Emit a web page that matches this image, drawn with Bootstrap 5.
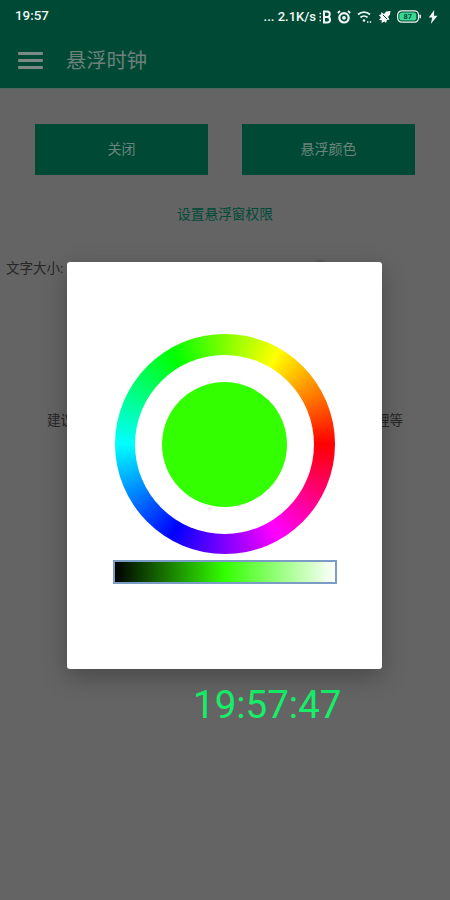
<!doctype html>
<html lang="zh">
<head>
<meta charset="utf-8">
<title>悬浮时钟</title>
<link rel="stylesheet" href="https://cdn.jsdelivr.net/npm/bootstrap@5.3.0/dist/css/bootstrap.min.css">
<style>
html,body{height:100%;}
body{background:#646464;font-family:Roboto,"Noto Sans CJK SC",sans-serif;overflow:hidden;}
.app-frame{width:450px;height:900px;position:relative;background:#646464;}
.app-head{background:#004a35;height:89px;border-bottom:1px solid #53665f;}
.stat-bar{height:33px;padding:0 12px 0 15px;color:#f2f7f5;font-weight:500;}
.stat-time{font-size:13.4px;}
.stat-rate{font-size:13px;margin-right:-3px;}
.stat-icons{gap:6px;}
.bolt-icon{margin-left:1px;}
.tool-bar{height:55px;padding-left:18px;gap:23px;}
.burger{width:25px;height:17px;}
.burger i{display:block;height:3px;background:#7b8a85;border-radius:1px;}
.app-name{font-size:20.3px;color:#6d807a;line-height:1;padding-top:2px;}
.main-area{padding:35px 35px 0;}
.act-btn{width:173px;height:51px;background:#004a35;color:#6a857b;font-size:14px;border:0;border-radius:0;padding:0;}
.act-btn:hover{background:#004a35;color:#6a857b;}
.perm-link{font-size:13.7px;color:#004a36;margin-top:30px;line-height:18px;text-align:center;}
.size-label{font-size:13.5px;color:#262626;padding-left:6px;margin-top:36px;line-height:18px;}
.hint-row{font-size:13.5px;color:#262626;padding:0 47px;margin-top:134px;line-height:18px;}
.clock-text{font-size:38.5px;line-height:46px;color:#16ef69;margin-top:253px;padding-left:193px;}
.slider-knob{position:absolute;left:315px;top:259px;width:11px;height:11px;border-radius:50%;background:#5b5b5b;}
.color-modal{position:absolute;left:67px;top:262px;width:315px;height:407px;background:#fff;border-radius:3px;box-shadow:0 8px 24px rgba(0,0,0,.28);padding-top:72px;}
.hue-ring{width:220px;height:220px;border-radius:50%;background:conic-gradient(from 90deg,#f00,#f0f,#00f,#0ff,#0f0,#ff0,#f00);}
.hue-hole{width:179px;height:179px;border-radius:50%;background:#fff;}
.hue-pick{width:125px;height:125px;border-radius:50%;background:#33ff00;}
.shade-bar{width:224px;height:24px;margin-top:6px;border:2px solid #7b9cc4;background:linear-gradient(90deg,#000,#33ff00 50%,#fff);}
</style>
</head>
<body>
<div class="app-frame d-flex flex-column">
  <header class="app-head">
    <div class="stat-bar d-flex align-items-center justify-content-between">
      <span class="stat-time">19:57</span>
      <div class="d-flex align-items-center stat-icons">
        <span class="stat-rate">... 2.1K/s</span>
        <svg width="12" height="14" viewBox="0 0 12 14" fill="none" stroke="#f2f7f5" stroke-width="2"><path d="M5 1.500h3a2.600 2.600 0 0 1 0 5.500H5zM5 7h3.300a2.700 2.700 0 0 1 0 5.500H5z"/><path d="M.5 3.500h1.500M.5 7h1.500M.5 10.500h1.500" stroke-width="1.600"/></svg>
        <svg width="14" height="14" viewBox="0 0 14 14" fill="none" stroke="#f2f7f5"><circle cx="7" cy="7.800" r="4.700" stroke-width="2.200"/><circle cx="7" cy="7.800" r="1.900" fill="#f2f7f5" stroke="none"/><path d="M.8 3L3 1M13.200 3L11 1" stroke-width="1.800"/></svg>
        <svg width="15" height="13" viewBox="0 0 15 13" fill="none" stroke="#f2f7f5" stroke-width="1.700"><path d="M1 4.500a9 9 0 0 1 12 0M3.500 7.500a5.200 5.200 0 0 1 7 0"/><circle cx="7" cy="10.500" r="1.300" fill="#f2f7f5" stroke="none"/><path d="M10 12h5" stroke-dasharray="1.400 1.400" stroke-width="1.400"/></svg>
        <svg width="13" height="14" viewBox="0 0 13 14" fill="#f2f7f5"><path d="M12.500 1L8 1.500 6 4 3.500 2 3 4.500 .8 5 3 7.500 1 10l2.800.2L3.500 13l3-1.500 1.500 1.500 1-3 2.500-.5-1.500-2.500L12 4.500z"/><path d="M5 5l4 4" stroke="#004a35" stroke-width="1"/></svg>
        <svg width="24" height="13" viewBox="0 0 24 13"><rect x=".7" y=".8" width="20.800" height="11.400" rx="4" fill="none" stroke="#f2f7f5" stroke-width="1.200"/><rect x="2.300" y="2.400" width="17" height="8.200" rx="2.500" fill="#36d892"/><rect x="22.400" y="4.500" width="1.500" height="4" rx=".7" fill="#f2f7f5"/><text x="10.800" y="9.300" text-anchor="middle" font-size="7.500" font-family="Roboto,sans-serif" font-weight="700" fill="#004a35">87</text></svg>
        <svg width="10" height="14" viewBox="0 0 10 14" fill="#f2f7f5" class="bolt-icon"><path d="M6.200 0L.8 7.500h3.400L2.800 14 9.500 5.800H6z"/></svg>
      </div>
    </div>
    <div class="tool-bar d-flex align-items-center">
      <div class="burger d-flex flex-column justify-content-between"><i></i><i></i><i></i></div>
      <span class="app-name">悬浮时钟</span>
    </div>
  </header>
  <main class="flex-grow-1">
    <div class="main-area d-flex justify-content-between">
      <button type="button" class="btn act-btn">关闭</button>
      <button type="button" class="btn act-btn">悬浮颜色</button>
    </div>
    <div class="perm-link">设置悬浮窗权限</div>
    <div class="size-label">文字大小:</div>
    <div class="hint-row d-flex justify-content-between"><span>建议</span><span>锂等</span></div>
    <div class="clock-text">19:57:47</div>
  </main>
  <div class="slider-knob"></div>
  <div class="color-modal d-flex flex-column align-items-center">
    <div class="hue-ring d-flex align-items-center justify-content-center">
      <div class="hue-hole d-flex align-items-center justify-content-center">
        <div class="hue-pick"></div>
      </div>
    </div>
    <div class="shade-bar"></div>
  </div>
</div>
<script src="https://cdn.jsdelivr.net/npm/bootstrap@5.3.0/dist/js/bootstrap.bundle.min.js"></script>
</body>
</html>
